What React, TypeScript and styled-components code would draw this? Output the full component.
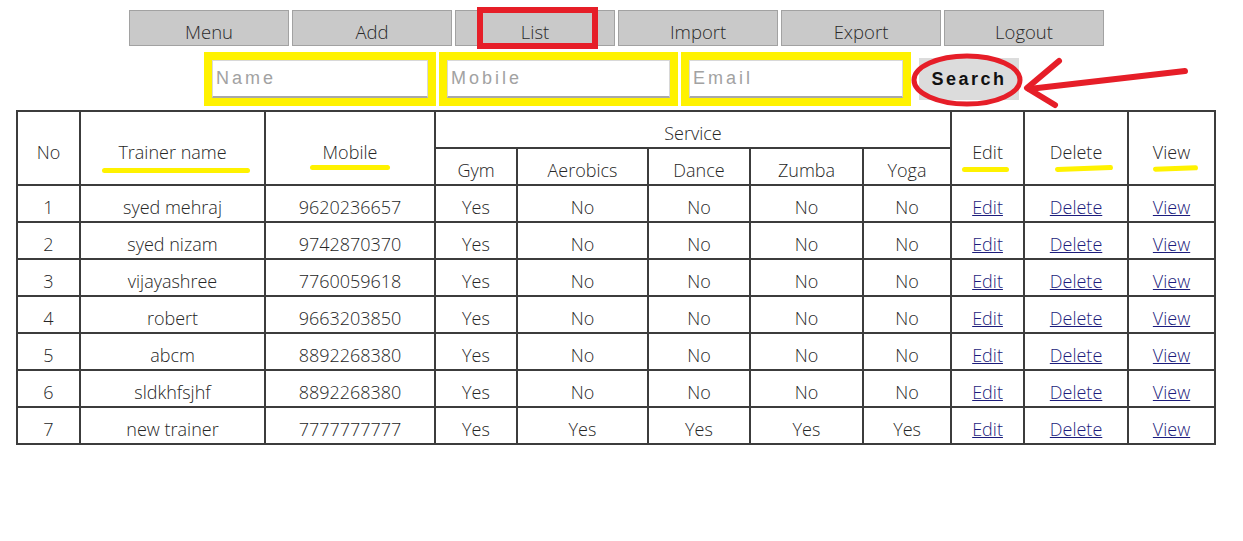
import React from "react";
import styled, { createGlobalStyle } from "styled-components";

const GlobalStyle = createGlobalStyle`
    body {
        margin: 0;
        background: #fff;
        font-family: "Open Sans", "Noto Sans", sans-serif;
    }
`;

const Page = styled.div`
    position: relative;
    padding-top: 10px;
    width: 1243px;
    height: 541px;
    box-sizing: border-box;
`;

const Nav = styled.nav`
    display: flex;
    gap: 3px;
    padding-left: 129px;
`;

const NavButton = styled.button`
    position: relative;
    width: 160px;
    height: 36px;
    padding: 8px 0 0;
    background: #c9c9c9;
    border: 1px solid #a2a2a2;
    font-family: "Open Sans", sans-serif;
    font-weight: 300;
    font-size: 18.5px;
    color: #2a2a2a;
    line-height: 26px;
    cursor: pointer;
`;

// red annotation box around the active tab
const ActiveMark = styled.span`
    position: absolute;
    left: 21px;
    top: -4px;
    width: 121px;
    height: 42px;
    border: 6px solid #e61e28;
    box-sizing: border-box;
    pointer-events: none;
`;

const SearchRow = styled.div`
    display: flex;
    align-items: center;
    gap: 3px;
    padding-left: 204px;
    margin-top: 6px;
`;

const Marked = styled.div`
    border: 8px solid #fff200;
    display: flex;
`;

const Field = styled.input<{ $w: number }>`
    width: ${(p) => p.$w}px;
    height: 38px;
    box-sizing: border-box;
    border: 1px solid #d8d8d8;
    border-bottom: 2px solid #a8a8a8;
    padding: 0 3px;
    font-family: "Liberation Sans", Arial, sans-serif;
    font-size: 18px;
    letter-spacing: 3px;
    outline: none;
    &::placeholder {
        color: #a2a2a2;
    }
`;

const SearchWrap = styled.div`
    position: relative;
    margin-left: 5px;
`;

const SearchButton = styled.button`
    width: 100px;
    height: 42px;
    background: #dcdcdc;
    border: none;
    font-family: "Liberation Sans", Arial, sans-serif;
    font-weight: bold;
    font-size: 18px;
    letter-spacing: 2.5px;
    color: #111;
    cursor: pointer;
`;

const Annotation = styled.svg`
    position: absolute;
    left: -10px;
    top: -6px;
    overflow: visible;
    pointer-events: none;
`;

const Table = styled.table`
    margin: 4px 0 0 16px;
    width: 1198px;
    border-collapse: collapse;
    table-layout: fixed;
    font-weight: 300;
    font-size: 18px;
    color: #262626;
`;

const Cell = styled.td`
    border: 2px solid #3c3c3c;
    height: 37px;
    box-sizing: border-box;
    padding: 7px 0 0;
    text-align: center;
    line-height: 24px;
    white-space: nowrap;
`;

const Head = styled(Cell).attrs({ as: "th" })`
    font-weight: 300;
`;

const Underlined = styled.span<{ $l: number; $r: number; $b: number; $tilt?: number }>`
    position: relative;
    display: inline-block;
    &::after {
        content: "";
        position: absolute;
        left: ${(p) => p.$l}px;
        right: ${(p) => p.$r}px;
        bottom: ${(p) => p.$b}px;
        height: 5px;
        border-radius: 3px;
        background: #fff200;
        transform: rotate(${(p) => p.$tilt || 0}deg);
    }
`;

const Action = styled.a`
    color: #1c1c7c;
    text-decoration: underline;
    cursor: pointer;
`;

const widths = [63, 185, 170, 82, 131, 102, 113, 88, 73, 104, 87];
const tabs = ["Menu", "Add", "List", "Import", "Export", "Logout"];

const trainers = [
    ["1", "syed mehraj", "9620236657", "Yes", "No", "No", "No", "No"],
    ["2", "syed nizam", "9742870370", "Yes", "No", "No", "No", "No"],
    ["3", "vijayashree", "7760059618", "Yes", "No", "No", "No", "No"],
    ["4", "robert", "9663203850", "Yes", "No", "No", "No", "No"],
    ["5", "abcm", "8892268380", "Yes", "No", "No", "No", "No"],
    ["6", "sldkhfsjhf", "8892268380", "Yes", "No", "No", "No", "No"],
    ["7", "new trainer", "7777777777", "Yes", "Yes", "Yes", "Yes", "Yes"],
];

const App = () => {
    return (
        <Page>
            <GlobalStyle />
            <Nav>
                {tabs.map((t) => (
                    <NavButton key={t}>
                        {t}
                        {t === "List" && <ActiveMark />}
                    </NavButton>
                ))}
            </Nav>

            <SearchRow>
                <Marked>
                    <Field $w={216} placeholder="Name" />
                </Marked>
                <Marked>
                    <Field $w={223} placeholder="Mobile" />
                </Marked>
                <Marked>
                    <Field $w={214} placeholder="Email" />
                </Marked>
                <SearchWrap>
                    <SearchButton>Search</SearchButton>
                    <Annotation width="280" height="60" viewBox="0 0 280 60">
                        <ellipse cx="58" cy="28" rx="53" ry="24" fill="none" stroke="#e61e28" strokeWidth="5" />
                        <g stroke="#e61e28" strokeWidth="6" strokeLinecap="round" fill="none">
                            <path d="M120 37 L276 19" />
                            <path d="M150 9 L118 36 L146 53" strokeLinejoin="round" />
                        </g>
                    </Annotation>
                </SearchWrap>
            </SearchRow>

            <Table>
                <colgroup>
                    {widths.map((w, i) => (
                        <col key={i} style={{ width: w }} />
                    ))}
                </colgroup>
                <thead>
                    <tr>
                        <Head rowSpan={2}>No</Head>
                        <Head rowSpan={2}>
                            <Underlined $l={-16} $r={-23} $b={-9}>Trainer name</Underlined>
                        </Head>
                        <Head rowSpan={2}>
                            <Underlined $l={-13} $r={-13} $b={-6}>Mobile</Underlined>
                        </Head>
                        <Head colSpan={5}>Service</Head>
                        <Head rowSpan={2}>
                            <Underlined $l={-10} $r={-6} $b={-8}>Edit</Underlined>
                        </Head>
                        <Head rowSpan={2}>
                            <Underlined $l={5} $r={-11} $b={-7} $tilt={-2}>Delete</Underlined>
                        </Head>
                        <Head rowSpan={2}>
                            <Underlined $l={0} $r={-8} $b={-7} $tilt={-2}>View</Underlined>
                        </Head>
                    </tr>
                    <tr>
                        <Head>Gym</Head>
                        <Head>Aerobics</Head>
                        <Head>Dance</Head>
                        <Head>Zumba</Head>
                        <Head>Yoga</Head>
                    </tr>
                </thead>
                <tbody>
                    {trainers.map((row) => (
                        <tr key={row[0]}>
                            {row.map((v, i) => (
                                <Cell key={i}>{v}</Cell>
                            ))}
                            <Cell><Action>Edit</Action></Cell>
                            <Cell><Action>Delete</Action></Cell>
                            <Cell><Action>View</Action></Cell>
                        </tr>
                    ))}
                </tbody>
            </Table>
        </Page>
    );
};

export default App;
